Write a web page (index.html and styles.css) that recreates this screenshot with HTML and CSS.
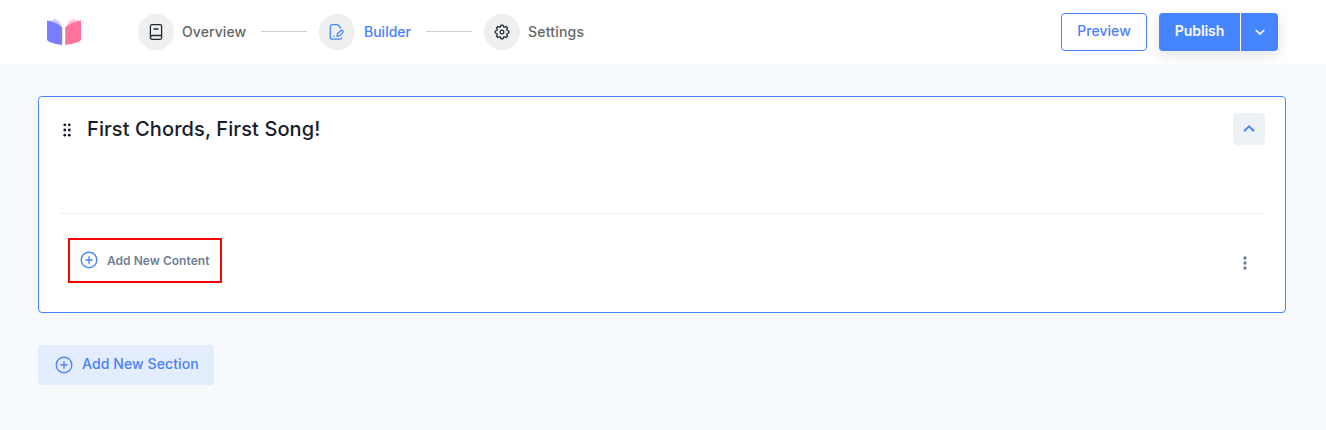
FILE: index.html
```html
<!DOCTYPE html>
<html lang="en">
<head>
<meta charset="utf-8">
<title>Course Builder</title>
<link rel="stylesheet" href="styles.css">
</head>
<body>
<header class="topbar">
  <svg class="logo" width="36" height="28" viewBox="0 0 36 28">
    <path d="M3 3.2 4.6 1.6 7 3 7.6 0.2 10.5 2.6 11.5 1.4 15.6 7.6 8 5Z" fill="#c9cbff"/>
    <path d="M33 3.2 31.4 1.6 29 3 28.4 0.2 25.5 2.6 24.5 1.4 20.4 7.6 28 5Z" fill="#ffc2d2"/>
    <path d="M1 2.6Q12 5 16.2 9.2V27Q10 26.5 3.6 24Q1 23 1 21.2Z" fill="#7b7dff"/>
    <path d="M35 2.6Q24 5 19.2 9.2V27Q26 26.5 32.4 24Q35 23 35 21.2Z" fill="#ff749b"/>
  </svg>
  <nav class="steps">
    <a class="step overview">
      <span class="step-icon"><svg width="16" height="18" viewBox="0 0 16 18" fill="none" stroke="#1f2937" stroke-width="1.3" stroke-linecap="round" stroke-linejoin="round"><path d="M4 1.7H12Q13.6 1.7 13.6 3.3V12.5H4.3Q2.4 12.5 2.4 14.2V3.3Q2.4 1.7 4 1.7ZM2.4 14.2Q2.4 16.3 4.4 16.3H12Q13.6 16.3 13.6 14.8V12.5M6 6H10"/></svg></span>
      <span class="step-label">Overview</span>
    </a>
    <span class="line"></span>
    <a class="step active">
      <span class="step-icon"><svg width="16" height="18" viewBox="0 0 16 18" fill="none" stroke="#4a86ff" stroke-width="1.3" stroke-linecap="round" stroke-linejoin="round"><path d="M11.5 5.2V4.7L8.7 1.7H3.5Q1.3 1.7 1.3 4V14Q1.3 16.2 3.5 16.2H10.5Q12 16.2 12.5 14.9M8.1 13.3 8.4 10.8 11.7 7.7Q12.8 6.8 13.7 7.7 14.6 8.6 13.7 9.6L10.5 12.9ZM4.9 13.2H5.2"/></svg></span>
      <span class="step-label">Builder</span>
    </a>
    <span class="line"></span>
    <a class="step">
      <span class="step-icon"><svg width="18" height="18" viewBox="0 0 18 18" fill="none" stroke="#1f2937" stroke-width="1.3" stroke-linejoin="round"><path d="M7.5 3.9 8 2.2H10L10.5 3.9 11.6 4.3 13.1 3.4 14.6 4.9 13.7 6.4 14.1 7.5 15.8 8V10L14.1 10.5 13.7 11.6 14.6 13.1 13.1 14.6 11.6 13.7 10.5 14.1 10 15.8H8L7.5 14.1 6.4 13.7 4.9 14.6 3.4 13.1 4.3 11.6 3.9 10.5 2.2 10V8L3.9 7.5 4.3 6.4 3.4 4.9 4.9 3.4 6.4 4.3Z"/><circle cx="9" cy="9" r="1.9" stroke-width="1.2"/></svg></span>
      <span class="step-label">Settings</span>
    </a>
  </nav>
  <div class="actions">
    <button class="preview">Preview</button>
    <div class="publish-group">
      <button class="publish">Publish</button>
      <button class="publish-more"><svg width="12" height="12" viewBox="0 0 12 12" fill="none" stroke="#fff" stroke-width="1.7"><path d="M1.8 4 6 8.1 10.2 4"/></svg></button>
    </div>
  </div>
</header>
<main class="content">
  <section class="card">
    <div class="card-head">
      <svg class="grip" width="8" height="14" viewBox="0 0 8 14" fill="#151a26"><circle cx="1.8" cy="1.8" r="1.4"/><circle cx="6.3" cy="1.8" r="1.4"/><circle cx="1.8" cy="7" r="1.4"/><circle cx="6.3" cy="7" r="1.4"/><circle cx="1.8" cy="12.2" r="1.4"/><circle cx="6.3" cy="12.2" r="1.4"/></svg>
      <h1 class="title">First Chords, First Song!</h1>
      <button class="collapse"><svg width="12" height="12" viewBox="0 0 12 12" fill="none" stroke="#4a86ff" stroke-width="2"><path d="M1 8.3 6 3.3 11 8.3"/></svg></button>
    </div>
    <div class="card-foot">
      <button class="add-content"><svg width="18" height="18" viewBox="0 0 18 18" fill="none" stroke="#4a86ff" stroke-width="1.4"><circle cx="9" cy="9" r="7.8"/><path d="M9 5.3V12.7M5.3 9H12.7"/></svg><span>Add New Content</span></button>
      <svg class="more" width="4" height="14" viewBox="0 0 4 14" fill="#718096"><circle cx="2" cy="2" r="1.7"/><circle cx="2" cy="7" r="1.7"/><circle cx="2" cy="12" r="1.7"/></svg>
    </div>
  </section>
  <button class="add-section"><svg width="18" height="18" viewBox="0 0 18 18" fill="none" stroke="#4a86ff" stroke-width="1.4"><circle cx="9" cy="9" r="7.8"/><path d="M9 5.3V12.7M5.3 9H12.7"/></svg><span class="add-label">Add New Section</span></button>
</main>
</body>
</html>
```

FILE: styles.css
```css
* { box-sizing: border-box; }
body { margin: 0; height: 430px; overflow: hidden; background: #f6fafd; font-family: Inter, sans-serif; }
button { margin: 0; padding: 0; border: 0; background: none; font-family: inherit; }
svg { display: block; flex: none; }
.topbar { display: flex; align-items: center; height: 64px; padding: 0 48px 0 46px; background: #fff; }
.logo { margin-right: 56px; }
.steps { display: flex; align-items: center; }
.step { display: flex; align-items: center; gap: 8px; color: #666; font-size: 14px; font-weight: 450; line-height: 20px; letter-spacing: .2px; white-space: nowrap; }
.overview { width: 107px; letter-spacing: .08px; }
.active { width: 91px; gap: 9px; color: #4a80ff; letter-spacing: 0; }
.step-icon { display: flex; flex: none; align-items: center; justify-content: center; width: 36px; height: 36px; border-radius: 50%; background: #efefef; }
.line { width: 46px; height: 1px; margin: 0 12px 1px 16px; background: #cfcfcf; }
.actions { display: flex; gap: 12px; margin-left: auto; }
.preview { width: 86px; height: 38px; padding-bottom: 3px; border: 1px solid #4585ff; border-radius: 4px; background: #fff; color: #4a80ff; font-size: 14px; font-weight: 450; letter-spacing: .05px; }
.publish-group { display: flex; width: 119px; height: 38px; border-radius: 4px; background: #4585ff; box-shadow: 0 4px 14px rgba(0, 0, 0, .12); }
.publish { width: 81px; padding-bottom: 3px; color: #fff; font-size: 14px; font-weight: 600; letter-spacing: -.05px; }
.publish-more { display: flex; align-items: center; justify-content: center; width: 38px; border-left: 1px solid #fff; }
.content { padding: 32px 40px 0 38px; }
.card { height: 217px; padding: 16px 20px 0 21px; border: 1px solid #4585ff; border-radius: 4px; background: #fff; }
.card-head { display: flex; align-items: center; height: 101px; padding-bottom: 69px; border-bottom: 1px solid #edeff2; }
.grip { margin: 2px 16px 0 3px; }
.title { margin: 0; color: #171d2b; font-size: 20px; font-weight: 500; line-height: 32px; letter-spacing: .1px; }
.collapse { display: flex; align-items: center; justify-content: center; width: 32px; height: 32px; margin-left: auto; border-radius: 4px; background: #edf2f7; }
.card-foot { display: flex; align-items: center; justify-content: space-between; padding: 24px 18px 0 8px; }
.add-content { display: flex; align-items: center; gap: 9px; width: 154px; height: 45px; padding: 0 0 1px 10px; border: 2px solid #f00; color: #718096; font-size: 12px; font-weight: 600; letter-spacing: .03px; white-space: nowrap; }
.more { margin-top: 5px; }
.add-section { display: flex; align-items: center; gap: 9px; width: 176px; height: 40px; margin-top: 32px; padding-left: 17px; border-radius: 4px; background: #e4edfd; color: #4a80ff; font-size: 14px; font-weight: 450; letter-spacing: .1px; white-space: nowrap; }
.add-label { padding-bottom: 3px; }
```
